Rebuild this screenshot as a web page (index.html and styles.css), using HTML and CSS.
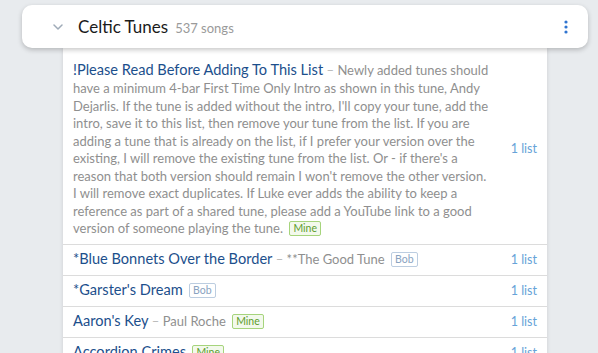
FILE: index.html
```html
<!DOCTYPE html>
<html>
<head>
<meta charset="utf-8">
<link rel="stylesheet" href="styles.css">
</head>
<body>
<div class="page">
  <header class="card">
    <svg class="chev" width="10" height="6" viewBox="0 0 10 6"><path d="M1 1 L5 5 L9 1" fill="none" stroke="#9fabb8" stroke-width="1.5" stroke-linecap="round" stroke-linejoin="round"/></svg>
    <h1 class="title">Celtic Tunes</h1>
    <span class="count">537 songs</span>
    <span class="spacer"></span>
    <svg class="kebab" width="4" height="14" viewBox="0 0 4 14"><circle cx="2" cy="2" r="1.6" fill="#2f74d0"/><circle cx="2" cy="7" r="1.6" fill="#2f74d0"/><circle cx="2" cy="12" r="1.6" fill="#2f74d0"/></svg>
  </header>
  <main class="panel">
    <div class="row first">
      <div class="text"><a class="name">!Please Read Before Adding To This List</a> <span class="dash">–</span> <span class="desc">Newly added tunes should have a minimum 4-bar First Time Only Intro as shown in this tune, Andy Dejarlis. If the tune is added without the intro, I'll copy your tune, add the intro, save it to this list, then remove your tune from the list. If you are adding a tune that is already on the list, if I prefer your version over the existing, I will remove the existing tune from the list. Or - if there's a reason that both version should remain I won't remove the other version. I will remove exact duplicates. If Luke ever adds the ability to keep a reference as part of a shared tune, please add a YouTube link to a good version of someone playing the tune.</span> <span class="badge mine">Mine</span></div>
      <span class="lists">1 list</span>
    </div>
    <div class="row">
      <div class="text"><a class="name">*Blue Bonnets Over the Border</a> <span class="dash">–</span> <span class="desc">**The Good Tune</span> <span class="badge bob">Bob</span></div>
      <span class="lists">1 list</span>
    </div>
    <div class="row">
      <div class="text"><a class="name">*Garster's Dream</a> <span class="badge bob">Bob</span></div>
      <span class="lists">1 list</span>
    </div>
    <div class="row">
      <div class="text"><a class="name">Aaron's Key</a> <span class="dash">–</span> <span class="desc">Paul Roche</span> <span class="badge mine">Mine</span></div>
      <span class="lists">1 list</span>
    </div>
    <div class="row">
      <div class="text"><a class="name">Accordion Crimes</a> <span class="badge mine">Mine</span></div>
      <span class="lists">1 list</span>
    </div>
  </main>
</div>
</body>
</html>
```

FILE: styles.css
```css
* { box-sizing: border-box; }
html, body { margin: 0; padding: 0; }
body {
  background: #e8ebee;
  font-family: Lato, "Open Sans", sans-serif;
  overflow: hidden;
  height: 353px;
}
.page {
  padding: 5px 10px 0 22px;
}
.card {
  position: relative;
  z-index: 2;
  height: 43px;
  background: #fff;
  border-radius: 10px;
  box-shadow: 0 2px 5px rgba(0,0,0,0.22);
  display: flex;
  align-items: center;
  padding: 0 20px 0 31px;
}
.chev { margin-top: 1px; }
.title {
  margin: 0 0 0 15px;
  font-size: 17px;
  font-weight: 400;
  color: #1b1b1b;
}
.count {
  margin-left: 7px;
  font-size: 13px;
  color: #9a9a9a;
  margin-top: 2px;
}
.spacer { flex: 1; }
.kebab { margin-top: 1px; }
.panel {
  position: relative;
  z-index: 1;
  margin: 0 41px;
  background: #fff;
  box-shadow: 0 0 4px rgba(0,0,0,0.12);
  height: 310px;
}
.row {
  display: flex;
  align-items: center;
  justify-content: space-between;
  padding: 5px 10px 5px 10px;
  border-bottom: 1px solid #dcdcdc;
  min-height: 31px;
}
.row.first { padding-top: 11px; padding-bottom: 6px; }
.text {
  width: 419px;
  font-size: 13px;
  line-height: 17.5px;
  color: #8f8f8f;
}
.first .name { line-height: 21px; }
.name {
  font-size: 14.6px;
  color: #1c4f8c;
}
.dash { color: #b8b8b8; }
.desc { color: #8f8f8f; }
.badge {
  display: inline-block;
  font-size: 10.5px;
  line-height: 13px;
  padding: 0 3px;
  border: 1px solid;
  border-radius: 2px;
  vertical-align: 1px;
  margin-left: 3px;
}
.mine { color: #5c9c2c; border-color: #a6d47c; background: #f3f9ec; }
.bob { color: #8aa3bf; border-color: #bccde0; background: #fff; }
.lists {
  font-size: 12.5px;
  color: #66a3d8;
  white-space: nowrap;
}
```
